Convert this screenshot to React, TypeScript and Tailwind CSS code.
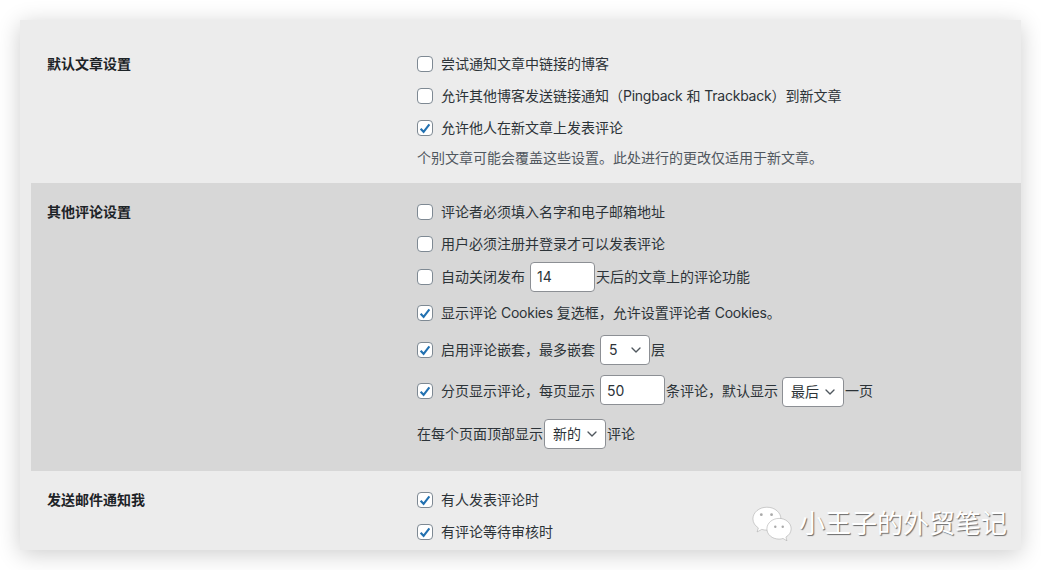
import React from 'react';
import { ChevronDown } from 'lucide-react';

const FONT = "font-['Inter','Noto_Sans_CJK_SC',sans-serif]";

const Checkbox = ({ checked = false }: { checked?: boolean }) => (
  <span className="w-4 h-4 mr-2 shrink-0 rounded bg-white border border-[#7e8993] flex items-center justify-center">
    {checked && (
      <svg viewBox="0 0 16 16" className="w-[15px] h-[15px]">
        <path d="M3 8.200 L6.400 11.800 L13 3.200" fill="none" stroke="#2271b1" strokeWidth="2.400" />
      </svg>
    )}
  </span>
);

const NumberBox = ({ value, className }: { value: string; className: string }) => (
  <input
    readOnly
    value={value}
    className={`w-[65px] h-[30px] px-[6px] bg-white border border-[#8c8f94] rounded text-sm text-[#2c3338] outline-none ${className}`}
  />
);

const Select = ({ value, className }: { value: string; className: string }) => (
  <span className={`relative inline-flex h-[30px] ${className}`}>
    <select
      value={value}
      onChange={() => {}}
      className="appearance-none w-full h-full pl-2 bg-white border border-[#8c8f94] rounded text-sm text-[#2c3338] outline-none"
    >
      <option>{value}</option>
    </select>
    <ChevronDown className="absolute right-[6px] top-[7px] w-4 h-4 text-[#50575e] pointer-events-none" />
  </span>
);

// Latin words run a little narrower in the reference than Inter does
const Latin = ({ children }: { children: React.ReactNode }) => (
  <span className="tracking-[-0.25px]">{children}</span>
);

const Row = ({ className, children }: { className: string; children: React.ReactNode }) => (
  <div className={`flex items-center text-sm text-[#2c3338] whitespace-pre ${className}`}>{children}</div>
);

const Section = ({ title, className, children }: { title: string; className: string; children: React.ReactNode }) => (
  <div className={`flex ${className}`}>
    <h2 className="w-[370px] shrink-0 text-sm font-bold text-[#1d2327] leading-5">{title}</h2>
    <div className="flex-1">{children}</div>
  </div>
);

const WeChatLogo = () => (
  <svg viewBox="0 0 44 38" className="w-[41px] h-[36px]">
    <g fill="#fff" stroke="#9a9a9a" strokeWidth="0.5">
      <path d="M16 1C7.500 1 1 6.700 1 13.500c0 4 2.300 7.400 5.800 9.700L5.500 27.500l5-2.700c1.700.5 3.500.8 5.500.8 8.500 0 15-5.500 15-12.100C31 6.700 24.500 1 16 1z" />
      <path d="M29 13c-7.200 0-13 5-13 11.200s5.800 11 13 11c1.500 0 3-.2 4.300-.7l4.200 2.500-1.100-4c3.500-2 5.600-5.200 5.600-8.800C42 18 36.200 13 29 13z" />
    </g>
    <circle cx="10" cy="9" r="1.500" fill="#aaa" />
    <circle cx="21" cy="9" r="1.500" fill="#aaa" />
    <circle cx="25" cy="22" r="1.300" fill="#aaa" />
    <circle cx="33" cy="22" r="1.300" fill="#aaa" />
  </svg>
);

export default function App() {
  return (
    <div className={`relative w-[1041px] h-[570px] overflow-hidden bg-white pt-5 pl-5 ${FONT}`}>
      <div className="relative w-[1001px] h-[530px] overflow-hidden bg-[#ececec] shadow-[0_4px_22px_rgba(0,0,0,0.2)]">
        <Section title="默认文章设置" className="h-[163px] pl-[27px] pt-[34px]">
          <div className="-mt-[6px]">
            <Row className="h-8"><Checkbox />尝试通知文章中链接的博客</Row>
            <Row className="h-8"><Checkbox />允许其他博客发送链接通知（<Latin>Pingback</Latin> 和 <Latin>Trackback</Latin>）到新文章</Row>
            <Row className="h-8"><Checkbox checked />允许他人在新文章上发表评论</Row>
            <Row className="h-7 text-[#50575e]">个别文章可能会覆盖这些设置。此处进行的更改仅适用于新文章。</Row>
          </div>
        </Section>

        <Section title="其他评论设置" className="h-[288px] ml-[11px] pl-4 pt-[19px] bg-[#d7d7d7]">
          <div className="-mt-[6px]">
            <Row className="h-8"><Checkbox />评论者必须填入名字和电子邮箱地址</Row>
            <Row className="h-8"><Checkbox />用户必须注册并登录才可以发表评论</Row>
            <Row className="h-[34px]">
              <Checkbox />
              <span className="mr-[5px]">自动关闭发布</span>
              <NumberBox value="14" className="mb-px" />
              <span className="ml-px">天后的文章上的评论功能</span>
            </Row>
            <Row className="h-[38px]"><Checkbox checked />显示评论 <Latin>Cookies</Latin> 复选框，允许设置评论者 <Latin>Cookies</Latin>。</Row>
            <Row className="h-9">
              <Checkbox checked />
              <span className="mr-[5px]">启用评论嵌套，最多嵌套</span>
              <Select value="5" className="w-[50px]" />
              <span className="ml-px">层</span>
            </Row>
            <Row className="h-[46px]">
              <Checkbox checked />
              <span className="mr-[5px]">分页显示评论，每页显示</span>
              <NumberBox value="50" className="mb-[2px]" />
              <span className="ml-px mr-[4px]">条评论，默认显示</span>
              <Select value="最后" className="w-[62px] mt-[2px]" />
              <span className="ml-px">一页</span>
            </Row>
            <Row className="h-[40px]">
              <span className="mr-px">在每个页面顶部显示</span>
              <Select value="新的" className="w-[62px]" />
              <span className="ml-px">评论</span>
            </Row>
          </div>
        </Section>

        <Section title="发送邮件通知我" className="pl-[27px] pt-[19px]">
          <div className="-mt-[6px]">
            <Row className="h-8"><Checkbox checked />有人发表评论时</Row>
            <Row className="h-8"><Checkbox checked />有评论等待审核时</Row>
          </div>
        </Section>
      </div>

      {/* watermark sits on top of the panel */}
      <div className="absolute left-[752px] top-[506px] flex items-center gap-[6px]">
        <WeChatLogo />
        <span className="text-[26px] leading-8 text-white [text-shadow:1px_1px_1px_rgba(0,0,0,0.55)]">小王子的外贸笔记</span>
      </div>
    </div>
  );
}
